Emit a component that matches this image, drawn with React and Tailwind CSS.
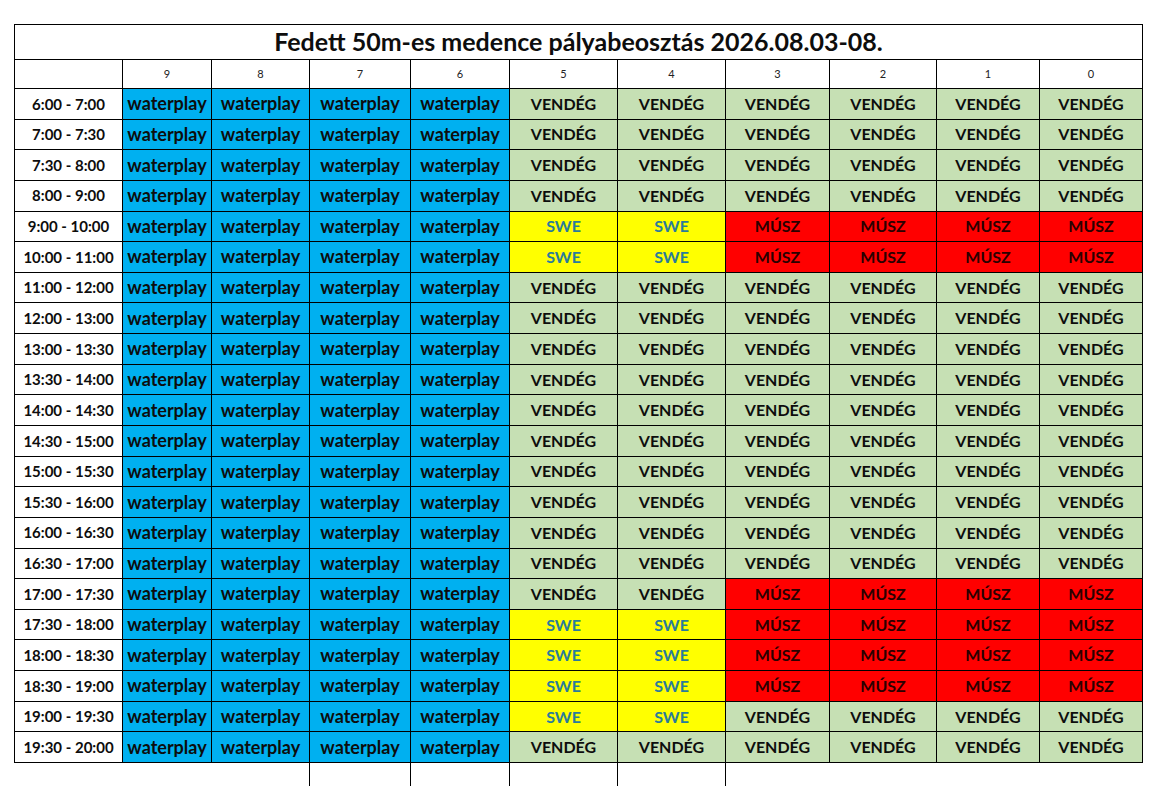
import React from "react";

const W = "waterplay";
const V = "VENDÉG";
const S = "SWE";
const M = "MÚSZ";

const times = [
  "6:00 - 7:00", "7:00 - 7:30", "7:30 - 8:00", "8:00 - 9:00", "9:00 - 10:00",
  "10:00 - 11:00", "11:00 - 12:00", "12:00 - 13:00", "13:00 - 13:30", "13:30 - 14:00",
  "14:00 - 14:30", "14:30 - 15:00", "15:00 - 15:30", "15:30 - 16:00", "16:00 - 16:30",
  "16:30 - 17:00", "17:00 - 17:30", "17:30 - 18:00", "18:00 - 18:30", "18:30 - 19:00",
  "19:00 - 19:30", "19:30 - 20:00",
];

const rowFor = (i) => {
  const base = [W, W, W, W];
  if (i === 4 || i === 5) return [...base, S, S, M, M, M, M];
  if (i === 16) return [...base, V, V, M, M, M, M];
  if (i >= 17 && i <= 19) return [...base, S, S, M, M, M, M];
  if (i === 20) return [...base, S, S, V, V, V, V];
  return [...base, V, V, V, V, V, V];
};

const cellCls = {
  [W]: "bg-[#00b0f0] text-[#0d0d0d] text-[18px]",
  [V]: "bg-[#c6e0b4] text-[#0d0d0d] text-[16px]",
  [S]: "bg-[#ffff00] text-[#2a7b9b] text-[16px]",
  [M]: "bg-[#ff0000] text-[#2a0000] text-[16px]",
};

const lanes = ["9", "8", "7", "6", "5", "4", "3", "2", "1", "0"];
const cols = "grid-cols-[108px_89px_98px_101px_99px_108px_108px_104px_107px_103px_103px]";

export default function App() {
  return (
    <div className="w-[1158px] h-[786px] bg-white overflow-hidden" style={{ fontFamily: "Lato, 'Open Sans', sans-serif" }}>
      <div className={`ml-[14px] mt-[24px] w-[1129px] h-[739px] grid ${cols} grid-rows-[35px_29px_repeat(22,1fr)] border-l border-t border-black`}>
        <div className="col-span-11 border-r border-b border-black flex items-center justify-center text-[25px] font-bold text-[#0d0d0d]">
          Fedett 50m-es medence pályabeosztás 2026.08.03-08.
        </div>
        <div className="border-r border-b border-black" />
        {lanes.map((l) => (
          <div key={l} className="border-r border-b border-black flex items-center justify-center text-[11px] text-[#222]">
            {l}
          </div>
        ))}
        {times.map((t, i) => (
          <React.Fragment key={t}>
            <div className="border-r border-b border-black flex items-center justify-center text-[15px] font-bold text-[#0d0d0d]">
              {t}
            </div>
            {rowFor(i).map((v, j) => (
              <div
                key={j}
                className={`border-r border-b border-black flex items-center justify-center font-bold ${cellCls[v]}`}
              >
                {v}
              </div>
            ))}
          </React.Fragment>
        ))}
      </div>
      <div className={`ml-[14px] pl-px w-[1129px] h-[30px] grid ${cols}`}>
        <div />
        <div />
        <div className="border-r border-black" />
        <div className="border-r border-black" />
        <div className="border-r border-black" />
        <div className="border-r border-black" />
        <div className="border-r border-black" />
      </div>
    </div>
  );
}
